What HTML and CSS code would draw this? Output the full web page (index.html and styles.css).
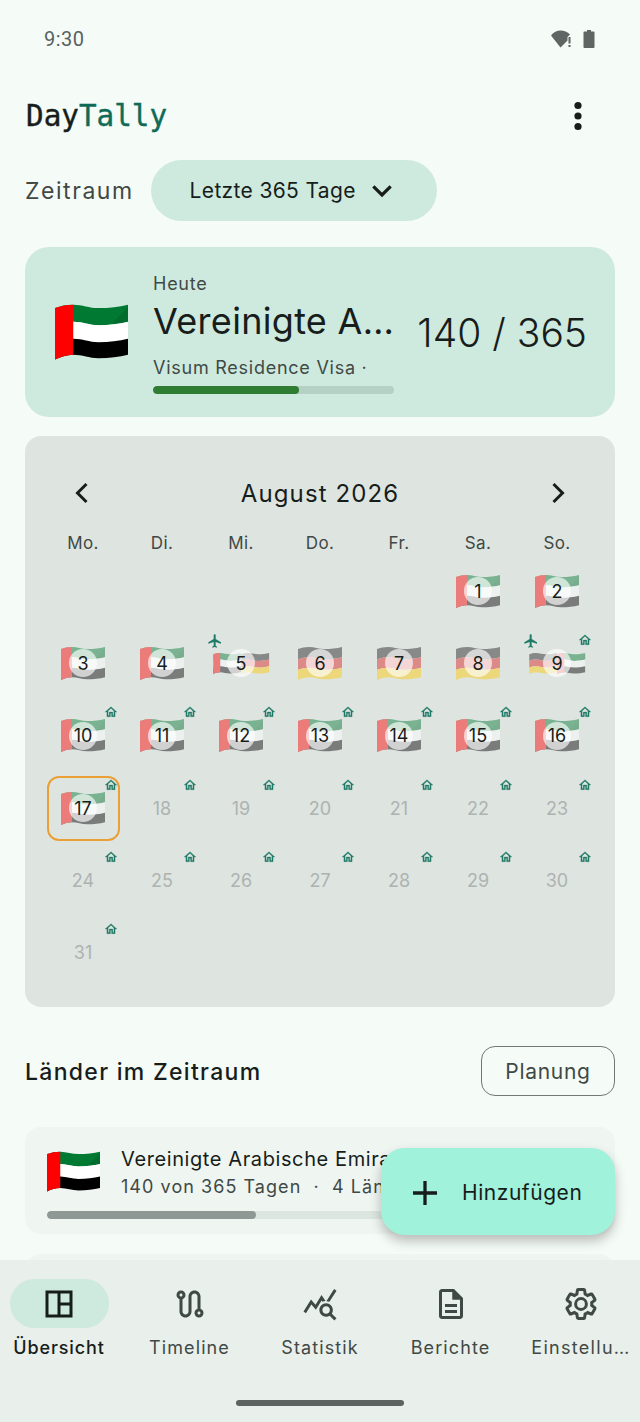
FILE: index.html
```html
<!DOCTYPE html>
<html lang="de">
<head>
    <meta charset="UTF-8">
    <meta name="viewport" content="width=device-width, initial-scale=1.0">
    <title>DayTally</title>
    <link rel="stylesheet" href="styles.css">
</head>
<body>
    <svg class="sprite" aria-hidden="true">
        <defs>
            <symbol id="flag-ae" viewBox="0 0 64 48">
                <path fill="#007a33" d="M0 3C5 1 10 0 16 0C24 0 30 3 38 3C48 3 56 2 64 0V15C56 17 48 18 38 18C30 18 24 15 16 15C10 15 5 16 0 18Z"/>
                <path fill="#006c2d" d="M50 16.500L64 2V15C60 16 55 16.500 50 16.500Z"/>
                <path fill="#fff" d="M0 18C5 16 10 15 16 15C24 15 30 18 38 18C48 18 56 17 64 15V30C56 32 48 33 38 33C30 33 24 30 16 30C10 30 5 31 0 33Z"/>
                <path fill="#000" d="M0 33C5 31 10 30 16 30C24 30 30 33 38 33C48 33 56 32 64 30V44C56 46 48 47 38 47C30 47 24 44 16 44C10 44 5 46 0 48Z"/>
                <path fill="#f00" d="M0 3C5 1 10 0 16 0V44C10 44 5 46 0 48Z"/>
            </symbol>
            <symbol id="flag-de" viewBox="0 0 64 48">
                <path fill="#1c1c1c" d="M0 3C5 1 10 0 16 0C24 0 30 3 38 3C48 3 56 2 64 0V15C56 17 48 18 38 18C30 18 24 15 16 15C10 15 5 16 0 18Z"/>
                <path fill="#db1f1f" d="M0 18C5 16 10 15 16 15C24 15 30 18 38 18C48 18 56 17 64 15V30C56 32 48 33 38 33C30 33 24 30 16 30C10 30 5 31 0 33Z"/>
                <path fill="#ffc800" d="M0 33C5 31 10 30 16 30C24 30 30 33 38 33C48 33 56 32 64 30V44C56 46 48 47 38 47C30 47 24 44 16 44C10 44 5 46 0 48Z"/>
            </symbol>
            <symbol id="ic-home" viewBox="0 0 24 24">
                <path d="M12 5.690l5 4.500V18h-2v-6H9v6H7v-7.810l5-4.500M12 3L2 12h3v8h6v-6h2v6h6v-8h3L12 3z"/>
            </symbol>
            <symbol id="ic-plane" viewBox="0 0 24 24">
                <path d="M21 16v-2l-8-5V3.500c0-.83-.67-1.500-1.500-1.500S10 2.670 10 3.500V9l-8 5v2l8-2.500V19l-2 1.500V22l3.500-1 3.500 1v-1.500L13 19v-5.500l8 2.500z"/>
            </symbol>
        </defs>
    </svg>

    <div class="statusbar">
        <span class="clock">9:30</span>
        <div class="status-icons">
            <svg class="wifi" viewBox="0 0 21 18"><path d="M0 5.500C2.500 2 6 .5 9.500.5S16.500 2 19 4.500L16.500 7v3.500L9.500 17.500Z"/><rect x="17.500" y="7" width="2" height="6.500"/><rect x="17.500" y="15" width="2" height="2"/></svg>
            <svg class="battery" viewBox="0 0 12 18"><path d="M4 0h4v1.500h2.500c.6 0 1 .4 1 1V17c0 .6-.4 1-1 1h-9c-.6 0-1-.4-1-1V2.500c0-.6.4-1 1-1H4z"/></svg>
        </div>
    </div>

    <main class="content">
        <header class="appbar">
            <div class="logo">Day<span class="logo-accent">Tally</span></div>
            <svg class="more" viewBox="0 0 24 24"><circle cx="12" cy="5" r="2.400"/><circle cx="12" cy="12" r="2.400"/><circle cx="12" cy="19" r="2.400"/></svg>
        </header>

        <div class="period">
            <span class="period-label">Zeitraum</span>
            <button class="period-pill">Letzte 365 Tage
                <svg class="chev-down" viewBox="0 0 24 24"><path d="M5.500 8.500l6.500 6.500 6.500-6.500"/></svg>
            </button>
        </div>

        <section class="today">
            <svg class="today-flag"><use href="#flag-ae"/></svg>
            <div class="today-text">
                <div class="today-small">Heute</div>
                <div class="today-name">Vereinigte A…</div>
                <div class="today-small today-visa">Visum Residence Visa ·</div>
                <div class="today-bar"><div class="today-fill" style="width: 60.5%"></div></div>
            </div>
            <div class="today-count">140 / 365</div>
        </section>

        <section class="calendar">
            <div class="cal-head">
                <svg class="cal-arrow" viewBox="0 0 24 24"><path d="M15 6l-6 6 6 6"/></svg>
                <span class="cal-month">August 2026</span>
                <svg class="cal-arrow" viewBox="0 0 24 24"><path d="M9 6l6 6-6 6"/></svg>
            </div>
            <div class="weekdays">
                <span>Mo.</span><span>Di.</span><span>Mi.</span><span>Do.</span><span>Fr.</span><span>Sa.</span><span>So.</span>
            </div>
            <div class="days">
                <div class="day"></div><div class="day"></div><div class="day"></div><div class="day"></div><div class="day"></div>
                <div class="day"><svg class="flag"><use href="#flag-ae"/></svg><span class="num">1</span></div>
                <div class="day"><svg class="flag"><use href="#flag-ae"/></svg><span class="num">2</span></div>

                <div class="day"><svg class="flag"><use href="#flag-ae"/></svg><span class="num">3</span></div>
                <div class="day"><svg class="flag"><use href="#flag-ae"/></svg><span class="num">4</span></div>
                <div class="day"><svg class="flag half"><use href="#flag-ae"/></svg><svg class="flag half"><use href="#flag-de"/></svg><span class="num">5</span><svg class="plane"><use href="#ic-plane"/></svg></div>
                <div class="day"><svg class="flag"><use href="#flag-de"/></svg><span class="num">6</span></div>
                <div class="day"><svg class="flag"><use href="#flag-de"/></svg><span class="num">7</span></div>
                <div class="day"><svg class="flag"><use href="#flag-de"/></svg><span class="num">8</span></div>
                <div class="day"><svg class="flag half"><use href="#flag-de"/></svg><svg class="flag half"><use href="#flag-ae"/></svg><span class="num">9</span><svg class="plane"><use href="#ic-plane"/></svg><svg class="home"><use href="#ic-home"/></svg></div>

                <div class="day"><svg class="flag"><use href="#flag-ae"/></svg><span class="num">10</span><svg class="home"><use href="#ic-home"/></svg></div>
                <div class="day"><svg class="flag"><use href="#flag-ae"/></svg><span class="num">11</span><svg class="home"><use href="#ic-home"/></svg></div>
                <div class="day"><svg class="flag"><use href="#flag-ae"/></svg><span class="num">12</span><svg class="home"><use href="#ic-home"/></svg></div>
                <div class="day"><svg class="flag"><use href="#flag-ae"/></svg><span class="num">13</span><svg class="home"><use href="#ic-home"/></svg></div>
                <div class="day"><svg class="flag"><use href="#flag-ae"/></svg><span class="num">14</span><svg class="home"><use href="#ic-home"/></svg></div>
                <div class="day"><svg class="flag"><use href="#flag-ae"/></svg><span class="num">15</span><svg class="home"><use href="#ic-home"/></svg></div>
                <div class="day"><svg class="flag"><use href="#flag-ae"/></svg><span class="num">16</span><svg class="home"><use href="#ic-home"/></svg></div>

                <div class="day day-today"><svg class="flag"><use href="#flag-ae"/></svg><span class="num">17</span><svg class="home"><use href="#ic-home"/></svg></div>
                <div class="day day-future">18<svg class="home"><use href="#ic-home"/></svg></div>
                <div class="day day-future">19<svg class="home"><use href="#ic-home"/></svg></div>
                <div class="day day-future">20<svg class="home"><use href="#ic-home"/></svg></div>
                <div class="day day-future">21<svg class="home"><use href="#ic-home"/></svg></div>
                <div class="day day-future">22<svg class="home"><use href="#ic-home"/></svg></div>
                <div class="day day-future">23<svg class="home"><use href="#ic-home"/></svg></div>

                <div class="day day-future">24<svg class="home"><use href="#ic-home"/></svg></div>
                <div class="day day-future">25<svg class="home"><use href="#ic-home"/></svg></div>
                <div class="day day-future">26<svg class="home"><use href="#ic-home"/></svg></div>
                <div class="day day-future">27<svg class="home"><use href="#ic-home"/></svg></div>
                <div class="day day-future">28<svg class="home"><use href="#ic-home"/></svg></div>
                <div class="day day-future">29<svg class="home"><use href="#ic-home"/></svg></div>
                <div class="day day-future">30<svg class="home"><use href="#ic-home"/></svg></div>

                <div class="day day-future">31<svg class="home"><use href="#ic-home"/></svg></div>
            </div>
        </section>

        <div class="section-head">
            <h2 class="section-title">Länder im Zeitraum</h2>
            <button class="plan-btn">Planung</button>
        </div>

        <div class="country">
            <div class="country-row">
                <svg class="country-flag"><use href="#flag-ae"/></svg>
                <div class="country-text">
                    <div class="country-name">Vereinigte Arabische Emirate</div>
                    <div class="country-sub">140 von 365 Tagen &nbsp;·&nbsp; 4 Länder</div>
                </div>
            </div>
            <div class="country-bar"><div class="country-fill" style="width: 38.3%"></div></div>
        </div>
        <div class="country country-next"></div>
    </main>

    <button class="fab">
        <svg class="fab-plus" viewBox="0 0 24 24"><path d="M12 4v16M4 12h16"/></svg>
        Hinzufügen
    </button>

    <nav class="bottomnav">
        <div class="nav-items">
            <div class="nav-item active">
                <div class="nav-icon"><svg viewBox="0 0 24 24"><path class="line" d="M4 4h16v16H4zM12 4v16M12 12h8"/></svg></div>
                <span class="nav-label">Übersicht</span>
            </div>
            <div class="nav-item">
                <div class="nav-icon"><svg viewBox="0 0 24 24"><path d="M19 15.180V7c0-2.210-1.790-4-4-4s-4 1.790-4 4v10c0 1.100-.9 2-2 2s-2-.9-2-2V8.820C8.160 8.400 9 7.300 9 6c0-1.660-1.340-3-3-3S3 4.340 3 6c0 1.300.84 2.400 2 2.820V17c0 2.210 1.790 4 4 4s4-1.790 4-4V7c0-1.100.9-2 2-2s2 .9 2 2v8.180c-1.160.41-2 1.510-2 2.820 0 1.660 1.340 3 3 3s3-1.340 3-3c0-1.300-.84-2.400-2-2.820zM6 7c-.55 0-1-.45-1-1s.45-1 1-1 1 .45 1 1-.45 1-1 1zm12 12c-.55 0-1-.45-1-1s.45-1 1-1 1 .45 1 1-.45 1-1 1z"/></svg></div>
                <span class="nav-label">Timeline</span>
            </div>
            <div class="nav-item">
                <div class="nav-icon"><svg viewBox="0 0 24 24"><path d="M19.880 18.470c.44-.7.7-1.510.7-2.390 0-2.490-2.010-4.500-4.500-4.500s-4.500 2.010-4.500 4.500 2.010 4.500 4.490 4.500c.88 0 1.700-.26 2.390-.7L21.580 23 23 21.580l-3.120-3.110zm-3.800.11c-1.380 0-2.500-1.120-2.500-2.500s1.120-2.500 2.500-2.500 2.500 1.120 2.500 2.500-1.120 2.500-2.500 2.500zm-.36-8.500c-.74.02-1.450.18-2.100.45l-.55-.83-3.800 6.180-3.010-3.520-3.630 5.810L1 17l5-8 3 3.500L13 6l2.720 4.080zm2.590.5c-.64-.28-1.330-.45-2.050-.49L21.380 2 23 3.180l-4.690 7.400z"/></svg></div>
                <span class="nav-label">Statistik</span>
            </div>
            <div class="nav-item">
                <div class="nav-icon"><svg viewBox="0 0 24 24"><path d="M8 16h8v2H8zm0-4h8v2H8zm6-10H6c-1.100 0-2 .9-2 2v16c0 1.100.89 2 1.990 2H18c1.100 0 2-.9 2-2V8l-6-6zm4 18H6V4h7v5h5v11z"/><path d="M13 3h1l5 5v1h-6z"/></svg></div>
                <span class="nav-label">Berichte</span>
            </div>
            <div class="nav-item">
                <div class="nav-icon"><svg viewBox="0 0 24 24"><path class="line-thin" d="M19.140 12.940c.04-.3.06-.61.06-.94 0-.32-.02-.64-.07-.94l2.030-1.580c.18-.14.23-.41.12-.61l-1.920-3.320c-.12-.22-.37-.29-.59-.22l-2.390.96c-.5-.38-1.030-.7-1.620-.94l-.36-2.540c-.04-.24-.24-.41-.48-.41h-3.840c-.24 0-.43.17-.47.41l-.36 2.540c-.59.24-1.130.57-1.620.94l-2.390-.96c-.22-.08-.47 0-.59.22L2.740 8.870c-.12.21-.08.47.12.61l2.030 1.580c-.05.3-.09.63-.09.94s.02.64.07.94l-2.030 1.580c-.18.14-.23.41-.12.61l1.920 3.320c.12.22.37.29.59.22l2.390-.96c.5.38 1.030.7 1.620.94l.36 2.54c.05.24.24.41.48.41h3.840c.24 0 .44-.17.47-.41l.36-2.540c.59-.24 1.130-.56 1.620-.94l2.390.96c.22.08.47 0 .59-.22l1.920-3.320c.12-.22.07-.47-.12-.61l-2.010-1.580zM12 15.600c-1.980 0-3.600-1.620-3.600-3.600s1.620-3.600 3.600-3.600 3.600 1.620 3.600 3.600-1.620 3.600-3.600 3.600z"/></svg></div>
                <span class="nav-label nav-label-long">Einstellu…</span>
            </div>
        </div>
        <div class="gesture"></div>
    </nav>
</body>
</html>
```

FILE: styles.css
```css
* {
    margin: 0;
    padding: 0;
    box-sizing: border-box;
    font-family: 'Inter', 'Noto Sans', sans-serif;
}

body {
    background-color: #f5fbf7;
    color: #171d1a;
    width: 640px;
    height: 1422px;
    display: flex;
    flex-direction: column;
    overflow: hidden;
    position: relative;
}

button {
    background: none;
    border: none;
    color: inherit;
}

.sprite {
    width: 0;
    height: 0;
    position: absolute;
}

/* status bar */
.statusbar {
    height: 78px;
    flex-shrink: 0;
    display: flex;
    align-items: center;
    justify-content: space-between;
    padding: 0 45px 0 44px;
}

.clock {
    font-family: 'Roboto', sans-serif;
    font-size: 20px;
    color: #59625f;
    letter-spacing: 0.5px;
}

.status-icons {
    display: flex;
    align-items: center;
    gap: 11px;
}

.status-icons svg {
    fill: #5e6563;
}

.wifi {
    width: 21px;
    height: 18px;
}

.battery {
    width: 12px;
    height: 18px;
}

/* scrolling content */
.content {
    flex: 1;
    min-height: 0;
    overflow: hidden;
    padding: 0 25px;
}

.appbar {
    height: 76px;
    display: flex;
    align-items: center;
    justify-content: space-between;
    padding: 0 1px;
}

.logo {
    font-family: 'DejaVu Sans Mono', monospace;
    font-size: 29.300px;
    color: #171d1a;
    -webkit-text-stroke: 0.4px currentColor;
}

.logo-accent {
    font-family: inherit;
    color: #0f6b57;
}

.more {
    width: 36px;
    height: 36px;
    margin-right: 18px;
    fill: #171d1a;
}

.period {
    margin-top: 6px;
    display: flex;
    align-items: center;
    gap: 17px;
}

.period-label {
    font-size: 23px;
    color: #3f4945;
    letter-spacing: 1.550px;
}

.period-pill {
    width: 286px;
    height: 61px;
    border-radius: 31px;
    background-color: #cee9de;
    display: flex;
    align-items: center;
    justify-content: center;
    gap: 10px;
    font-size: 21px;
    letter-spacing: 0.35px;
}

.chev-down {
    width: 32px;
    height: 32px;
    fill: none;
    stroke: #171d1a;
    stroke-width: 2.400;
}

/* today card */
.today {
    margin-top: 26px;
    height: 170px;
    border-radius: 24px;
    background-color: #cee9de;
    display: flex;
    align-items: center;
    padding: 0 28px 0 30px;
}

.today-flag {
    width: 73px;
    height: 56px;
    flex-shrink: 0;
    margin-right: 25px;
}

.today-text {
    width: 241px;
    flex-shrink: 0;
    margin-top: 3px;
}

.today-small {
    font-size: 18px;
    color: #3f4945;
    letter-spacing: 0.75px;
}

.today-name {
    font-size: 36px;
    line-height: 50px;
    letter-spacing: 0.3px;
    white-space: nowrap;
    margin-top: 2px;
}

.today-visa {
    margin-top: 11px;
}

.today-bar {
    margin-top: 8px;
    height: 8px;
    border-radius: 4px;
    background-color: #b5d1c4;
    overflow: hidden;
}

.today-fill {
    height: 100%;
    background-color: #2e7d32;
    border-radius: 4px;
}

.today-count {
    margin-left: auto;
    font-size: 39px;
    font-weight: 300;
    white-space: nowrap;
}

/* calendar */
.calendar {
    margin-top: 19px;
    height: 571px;
    border-radius: 16px;
    background-color: #dee4e0;
    padding: 22px 21.500px;
}

.cal-head {
    height: 70px;
    display: flex;
    align-items: center;
    justify-content: space-between;
    padding: 0 17px;
}

.cal-arrow {
    width: 36px;
    height: 36px;
    fill: none;
    stroke: #171d1a;
    stroke-width: 2;
}

.cal-month {
    font-size: 24px;
    letter-spacing: 1.100px;
}

.weekdays {
    margin-top: 5px;
    height: 20px;
    display: grid;
    grid-template-columns: repeat(7, 1fr);
    column-gap: 6px;
    align-items: center;
    justify-items: center;
}

.weekdays span {
    font-size: 17px;
    color: #3f4945;
    letter-spacing: 0.4px;
}

.days {
    margin-top: 5.500px;
    display: grid;
    grid-template-columns: repeat(7, 1fr);
    grid-auto-rows: 65px;
    gap: 7.400px 6px;
}

.day {
    position: relative;
    display: flex;
    align-items: center;
    justify-content: center;
    border-radius: 12px;
}

.day-today {
    border: 2px solid #eba035;
}

.day-future {
    font-size: 18px;
    color: #adb3b0;
}

.flag {
    width: 44px;
    height: 33px;
    opacity: 0.45;
}

.flag.half {
    width: 28.500px;
    height: 21px;
}

.num {
    position: absolute;
    left: 50%;
    top: 50%;
    transform: translate(-50%, -50%);
    width: 28px;
    height: 28px;
    border-radius: 50%;
    background-color: rgba(255, 255, 255, 0.65);
    display: flex;
    align-items: center;
    justify-content: center;
    font-size: 18px;
    color: #171d1a;
}

.home {
    position: absolute;
    top: 2px;
    right: 2px;
    width: 14px;
    height: 14px;
    fill: #1f7a67;
    stroke: #1f7a67;
    stroke-width: 0.5;
}

.day-today .home {
    top: 0;
    right: 0;
}

.plane {
    position: absolute;
    top: 2px;
    left: 2px;
    width: 16px;
    height: 16px;
    fill: #1f7a67;
}

/* countries */
.section-head {
    margin-top: 39px;
    height: 50px;
    display: flex;
    align-items: center;
    justify-content: space-between;
}

.section-title {
    font-size: 23px;
    font-weight: 500;
    letter-spacing: 1.300px;
    padding-top: 2px;
}

.plan-btn {
    width: 134px;
    height: 50px;
    border: 1.500px solid #6f7975;
    border-radius: 14px;
    font-size: 21px;
    letter-spacing: 0.7px;
    color: #3f4945;
}

.country {
    margin-top: 31px;
    height: 107px;
    border-radius: 16px;
    background-color: #eff5f1;
    padding: 22px 22px 0;
}

.country-next {
    margin-top: 20px;
}

.country-row {
    display: flex;
    align-items: center;
    gap: 21px;
    height: 44px;
}

.country-flag {
    width: 53px;
    height: 41px;
    flex-shrink: 0;
}

.country-text {
    padding-top: 4px;
}

.country-name {
    font-size: 20px;
    letter-spacing: 0.6px;
    white-space: nowrap;
    line-height: 28px;
}

.country-sub {
    font-size: 18px;
    color: #3f4945;
    white-space: nowrap;
    line-height: 28px;
    letter-spacing: 1.050px;
}

.country-bar {
    margin-top: 18px;
    height: 8px;
    border-radius: 4px;
    background-color: #dde5e1;
    overflow: hidden;
}

.country-fill {
    height: 100%;
    background-color: #8f9894;
    border-radius: 4px;
}

/* floating button */
.fab {
    position: absolute;
    left: 381px;
    top: 1148px;
    width: 234px;
    height: 87px;
    border-radius: 24px;
    background-color: #a0f2db;
    box-shadow: 0 6px 12px rgba(0, 0, 0, 0.25);
    display: flex;
    align-items: center;
    padding: 2px 0 0 26px;
    gap: 19px;
    font-size: 21px;
    letter-spacing: 0.55px;
}

.fab-plus {
    width: 36px;
    height: 36px;
    fill: none;
    stroke: #171d1a;
    stroke-width: 2.200;
}

/* bottom navigation */
.bottomnav {
    height: 162px;
    flex-shrink: 0;
    background-color: #e9efeb;
    position: relative;
}

.nav-items {
    display: flex;
    justify-content: space-between;
    padding-top: 19px;
}

.nav-item {
    width: 118px;
    display: flex;
    flex-direction: column;
    align-items: center;
    color: #3f4945;
}

.nav-icon {
    width: 99px;
    height: 49px;
    border-radius: 25px;
    display: flex;
    align-items: center;
    justify-content: center;
}

.nav-icon svg {
    width: 36px;
    height: 36px;
    fill: #3f4945;
}

.nav-icon .line {
    fill: none;
    stroke: #171d1a;
    stroke-width: 2;
}

.nav-icon .line-thin {
    fill: none;
    stroke: #3f4945;
    stroke-width: 2;
}

.nav-item.active {
    color: #171d1a;
}

.nav-item.active .nav-icon {
    background-color: #cee9de;
}

.nav-label {
    margin-top: 9px;
    font-size: 18px;
    letter-spacing: 1.100px;
    white-space: nowrap;
}

.nav-label-long {
    letter-spacing: 1.300px;
}

.nav-item.active .nav-label {
    font-weight: 500;
    letter-spacing: 0.9px;
}

.gesture {
    position: absolute;
    left: 236px;
    bottom: 16px;
    width: 168px;
    height: 6px;
    border-radius: 3px;
    background-color: #5c6361;
}
```
